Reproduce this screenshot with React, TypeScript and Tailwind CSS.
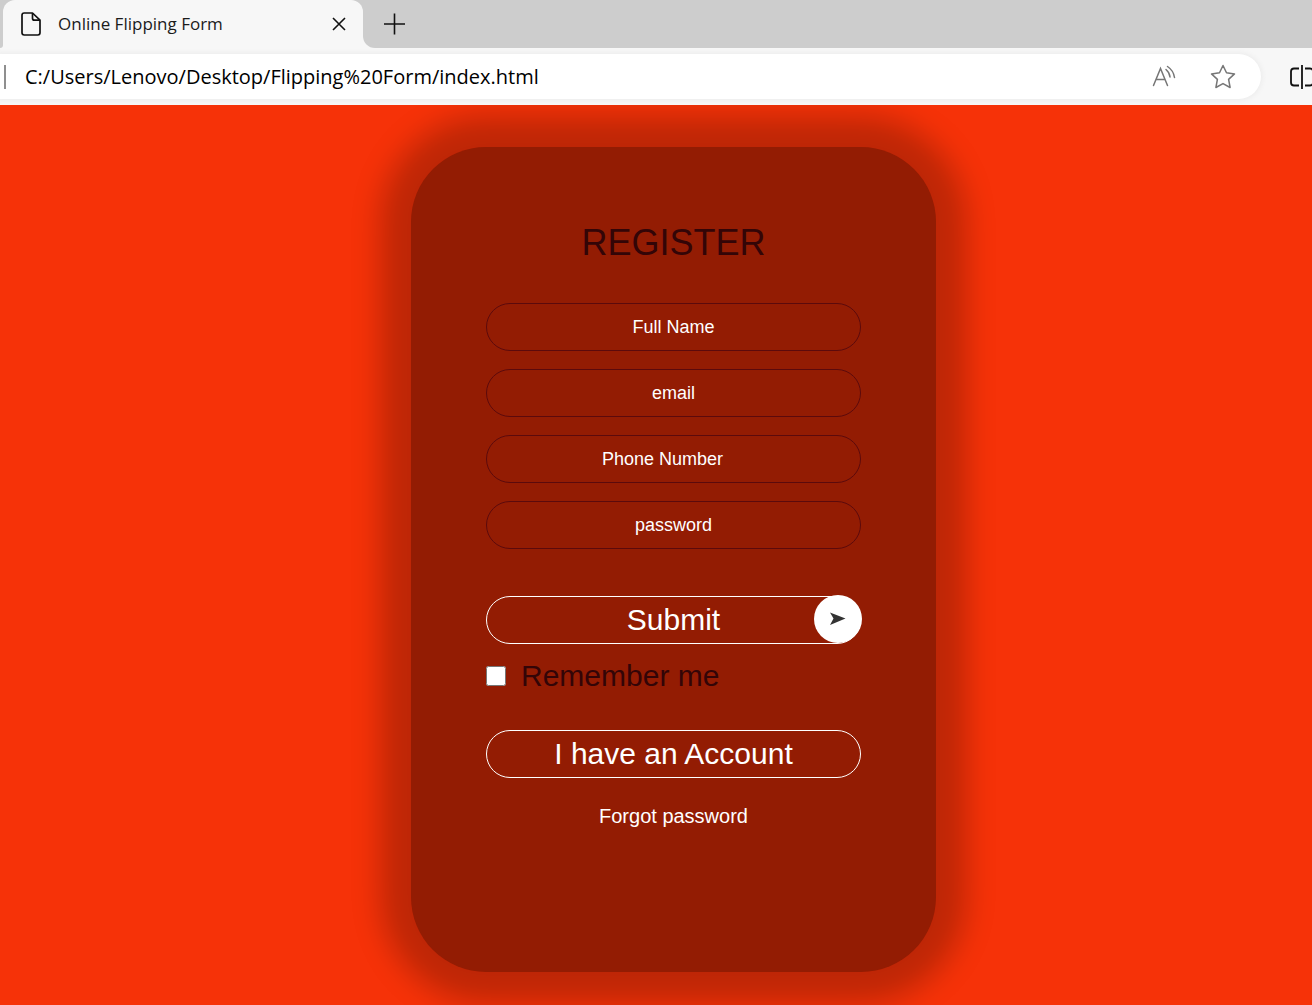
import React, { useState } from 'react';

const FIELDS = [
  { id: 'name', label: 'Full Name', type: 'text', pad: '' },
  { id: 'email', label: 'email', type: 'email', pad: '' },
  { id: 'phone', label: 'Phone Number', type: 'tel', pad: 'pr-[22px]' },
  { id: 'password', label: 'password', type: 'password', pad: '' },
];

const TabStrip: React.FC = () => (
  <div className="flex h-12 bg-[#cdcdcd]">
    <div className="bg-[#f7f7f7]">
      <div className="h-full w-[3px] rounded-br-lg bg-[#cdcdcd]" />
    </div>
    <div className="bg-[#cdcdcd]">
      <div className="flex h-full w-[360px] items-center rounded-t-xl bg-[#f7f7f7] pr-3 pl-[18px]">
        <svg width="20" height="24" viewBox="0 0 20 24" fill="none" stroke="#111" strokeWidth="1.7" strokeLinejoin="round">
          <path d="M3.2 1H11.5L19 8.2V20.8Q19 23 16.8 23H3.2Q1 23 1 20.8V3.2Q1 1 3.2 1Z" />
          <path d="M11.5 1V6.2Q11.5 8.2 13.5 8.2H19" />
        </svg>
        <span className="ml-[17px] flex-1 text-[17px] whitespace-nowrap text-[#1b1b1b]">Online Flipping Form</span>
        <button aria-label="Close tab" className="flex size-6 items-center justify-center">
          <svg width="14" height="14" viewBox="0 0 14 14" stroke="#111" strokeWidth="1.6">
            <path d="M1 1L13 13M13 1L1 13" />
          </svg>
        </button>
      </div>
    </div>
    <div className="bg-[#f7f7f7]">
      <div className="flex h-full items-center rounded-bl-xl bg-[#cdcdcd] pl-5">
        <button aria-label="New tab">
          <svg width="23" height="22" viewBox="0 0 23 22" stroke="#111" strokeWidth="1.6">
            <path d="M11.5 0.5V21.5M1 11H22" />
          </svg>
        </button>
      </div>
    </div>
  </div>
);

const AddressBar: React.FC = () => (
  <div className="flex h-[57px] items-center bg-[#f7f7f7]">
    <div className="flex h-[45px] min-w-0 flex-1 items-center rounded-r-full bg-white pr-[25px] pl-1 shadow-[0_0_4px_2px_#eeeeee]">
      <span className="h-6 w-0.5 bg-[#8f8f8f]" />
      <input
        aria-label="Address"
        defaultValue="C:/Users/Lenovo/Desktop/Flipping%20Form/index.html"
        className="ml-[19px] min-w-0 flex-1 bg-transparent text-[20px] text-black outline-none"
      />
      <button aria-label="Read aloud">
        <svg width="24" height="24" viewBox="0 0 24 24" fill="none" stroke="#767676" strokeWidth="1.5" strokeLinecap="round">
          <path d="M1.5 20.5L8.5 3.5L15.5 20.5M4 14.5H13" />
          <path d="M14 4.5Q17.5 7.5 18 12" />
          <path d="M15.5 1.5Q21.5 5.5 22.5 12.5" />
        </svg>
      </button>
      <button aria-label="Add to favorites" className="ml-[34px]">
        <svg width="26" height="25" viewBox="0 0 26 25" fill="none" stroke="#767676" strokeWidth="1.5" strokeLinejoin="round">
          <path d="M13 1.5L16.5 8.8L24.5 9.9L18.6 15.4L20.1 23.5L13 19.6L5.9 23.5L7.4 15.4L1.5 9.9L9.5 8.8Z" />
        </svg>
      </button>
    </div>
    <button aria-label="Split screen" className="ml-[29px] w-[22px] shrink-0 overflow-hidden">
      <svg width="24" height="24" viewBox="0 0 24 24" fill="none" stroke="#111" strokeWidth="1.8">
        <path d="M9 3.5H4Q1 3.5 1 6.5V17.5Q1 20.5 4 20.5H9" />
        <path d="M12 0V24" />
        <path d="M15 3.5H20Q23 3.5 23 6.5V17.5Q23 20.5 20 20.5H15" />
      </svg>
    </button>
  </div>
);

const RegisterForm: React.FC = () => {
  const [remember, setRemember] = useState(false);

  return (
    <form
      onSubmit={e => e.preventDefault()}
      className="flex min-h-[825px] w-[525px] flex-col rounded-[75px] bg-[#931c03] px-[75px] pt-[75px] pb-16 shadow-[0_0_30px_30px_rgba(0,0,0,0.23)]"
    >
      <h1 className="text-center text-[36px] leading-[42px] text-[#330507]">REGISTER</h1>
      <div className="mt-[39px] flex flex-col gap-[18px]">
        {FIELDS.map(f => (
          <input
            key={f.id}
            id={f.id}
            type={f.type}
            aria-label={f.label}
            placeholder={f.label}
            className={`h-12 w-full rounded-full border border-[#5c0a0c] bg-transparent text-center text-[18px] text-white placeholder:text-white placeholder:opacity-100 ${f.pad}`}
          />
        ))}
      </div>
      <button type="submit" className="relative mt-[47px] h-12 w-full rounded-full border border-white text-[30px] leading-[46px] text-white">
        Submit
        <span className="absolute -top-0.5 -right-0.5 flex size-12 items-center justify-center rounded-full bg-white">
          <svg width="18" height="14" viewBox="0 0 18 14" fill="#333">
            <path d="M1 0.5L16.5 6.5L1 13L4.5 6.5Z" />
          </svg>
        </span>
      </button>
      <div className="mt-[14px] flex items-center gap-[15px]">
        <input
          id="remember"
          type="checkbox"
          checked={remember}
          onChange={e => setRemember(e.target.checked)}
          className="size-5"
        />
        <label htmlFor="remember" className="text-[30px] leading-[36px] text-[#330507]">Remember me</label>
      </div>
      <button type="button" className="mt-9 h-12 w-full rounded-full border border-white text-[30px] leading-[46px] text-white">
        I have an Account
      </button>
      <a href="#" className="mt-[26px] self-center text-[20px] leading-6 text-white">Forgot password</a>
    </form>
  );
};

const App: React.FC = () => (
  <div className="flex min-h-screen flex-col">
    <header className="overflow-hidden font-['Open_Sans','Noto_Sans',sans-serif]">
      <TabStrip />
      <AddressBar />
    </header>
    <main className="flex flex-1 items-start justify-center overflow-hidden bg-[#f63208] pt-[42px] pb-[33px] pl-[35px] font-['Liberation_Sans',Arial,sans-serif]">
      <RegisterForm />
    </main>
  </div>
);

export default App;
